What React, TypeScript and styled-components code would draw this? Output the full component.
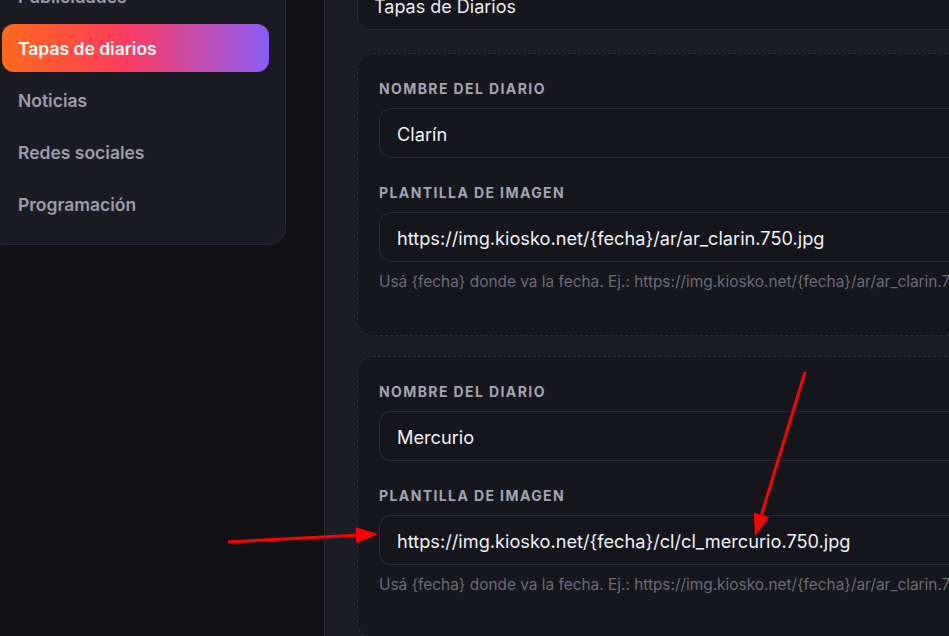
import React from 'react';
import styled, { createGlobalStyle } from 'styled-components';

const bg = '#111116';
const panel = '#1c1c26';
const cardBg = '#16161d';
const line = '#2c2c39';
const muted = '#9d9dab';

const GlobalStyle = createGlobalStyle`
  html, body {
    margin: 0;
    padding: 0;
    background: ${bg};
    overflow: hidden;
    font-family: Inter, "Noto Sans", sans-serif;
    -webkit-font-smoothing: antialiased;
  }
  #root {
    height: 636px;
    overflow: hidden;
  }
`;

const navItems = ['Publicidades', 'Tapas de diarios', 'Noticias', 'Redes sociales', 'Programación'];

const diarios = [
  { name: 'Clarín', url: 'https://img.kiosko.net/{fecha}/ar/ar_clarin.750.jpg' },
  { name: 'Mercurio', url: 'https://img.kiosko.net/{fecha}/cl/cl_mercurio.750.jpg' },
];

const HELP = 'Usá {fecha} donde va la fecha. Ej.: https://img.kiosko.net/{fecha}/ar/ar_clarin.750.jpg';

export default function App() {
  return (
    <Screen>
      <GlobalStyle />
      <Layout>
        <Sidebar>
          {navItems.map((item) => (
            <NavItem key={item} $active={item === 'Tapas de diarios'}>
              {item}
            </NavItem>
          ))}
        </Sidebar>
        <Main>
          <TitleInput>Tapas de Diarios</TitleInput>
          {diarios.map((d) => (
            <Card key={d.name}>
              <Field>
                <Label>Nombre del diario</Label>
                <Input>{d.name}</Input>
              </Field>
              <Field>
                <Label>Plantilla de imagen</Label>
                <Input>{d.url}</Input>
                <Help>{HELP}</Help>
              </Field>
            </Card>
          ))}
        </Main>
      </Layout>
      <Annotations viewBox="0 0 949 636">
        <line x1="228" y1="542" x2="356" y2="535.2" stroke="#ff0000" strokeWidth="3" />
        <polygon points="378,534 356.4,543.2 355.6,527.2" fill="#ff0000" />
        <line x1="805" y1="372" x2="761.4" y2="515" stroke="#ff0000" strokeWidth="3" />
        <polygon points="755,536 769.1,517.3 753.8,512.7" fill="#ff0000" />
      </Annotations>
    </Screen>
  );
}

const Screen = styled.div`
  position: relative;
  width: 949px;
  height: 636px;
  overflow: hidden;
`;

const Layout = styled.div`
  display: flex;
  align-items: flex-start;
  gap: 38px;
  width: 1300px;
  margin: -45px 0 0 -14px;
`;

const Sidebar = styled.nav`
  flex: 0 0 300px;
  box-sizing: border-box;
  display: flex;
  flex-direction: column;
  gap: 4px;
  padding: 16px 16px 16px 15px;
  background: #1b1b24;
  border: 1px solid ${line};
  border-radius: 18px;
`;

const NavItem = styled.div<{ $active?: boolean }>`
  height: 48px;
  display: flex;
  align-items: center;
  padding: 0 16px;
  border-radius: 12px;
  font-size: 17.5px;
  font-weight: 600;
  color: ${(p) => (p.$active ? '#ffffff' : muted)};
  background: ${(p) =>
    p.$active ? 'linear-gradient(90deg, #ff6a1c 0%, #ff3b5c 45%, #8b5cf6 100%)' : 'transparent'};
`;

const Main = styled.main`
  flex: 1;
  box-sizing: border-box;
  min-height: 800px;
  display: flex;
  flex-direction: column;
  gap: 20px;
  padding: 28px 32px;
  background: ${panel};
  border-left: 1px solid ${line};
`;

const TitleInput = styled.div`
  height: 47px;
  box-sizing: border-box;
  display: flex;
  align-items: center;
  padding: 0 16px;
  margin-bottom: 3px;
  background: ${cardBg};
  border: 1px solid ${line};
  border-radius: 12px;
  color: #ececf2;
  font-size: 18px;
`;

const Card = styled.section`
  display: flex;
  flex-direction: column;
  gap: 25px;
  padding: 25px 21px 43px;
  background: ${cardBg};
  border: 1px dashed #30303d;
  border-radius: 16px;
`;

const Field = styled.div`
  display: flex;
  flex-direction: column;
`;

const Label = styled.div`
  font-size: 14px;
  line-height: 20px;
  font-weight: 700;
  letter-spacing: 1.4px;
  text-transform: uppercase;
  color: #a4a4b2;
  margin-bottom: 9px;
`;

const Input = styled.div`
  height: 50px;
  box-sizing: border-box;
  display: flex;
  align-items: center;
  padding: 2px 17px 0;
  background: #15151c;
  border: 1px solid ${line};
  border-radius: 12px;
  color: #f1f1f6;
  font-size: 18.2px;
  white-space: nowrap;
`;

const Help = styled.div`
  margin-top: 10px;
  font-size: 15.4px;
  line-height: 20px;
  color: #6b6b79;
  white-space: nowrap;
`;

const Annotations = styled.svg`
  position: absolute;
  left: 0;
  top: 0;
  width: 949px;
  height: 636px;
  pointer-events: none;
`;
